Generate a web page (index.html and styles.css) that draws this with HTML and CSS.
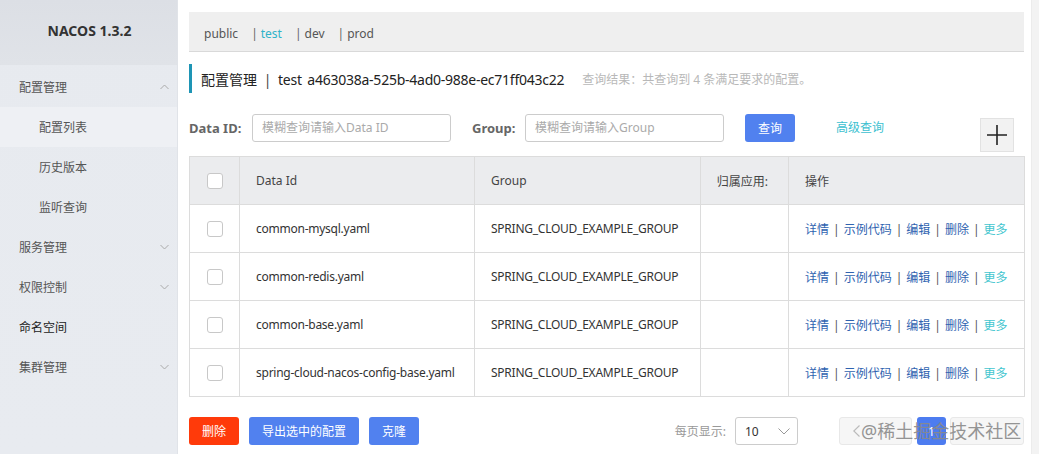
FILE: index.html
```html
<!DOCTYPE html>
<html lang="zh">
<head>
<meta charset="utf-8">
<title>NACOS</title>
<link rel="stylesheet" href="styles.css">
</head>
<body>
<div class="shell">
  <aside class="sidebar">
    <div class="brand">NACOS 1.3.2</div>
    <nav class="menu">
      <div class="item top">配置管理<svg class="chev" width="9" height="6" viewBox="0 0 9 6"><polyline points="0.5,5 4.5,1 8.5,5" fill="none" stroke="#aaa" stroke-width="1"/></svg></div>
      <div class="item sub active">配置列表</div>
      <div class="item sub">历史版本</div>
      <div class="item sub">监听查询</div>
      <div class="item top">服务管理<svg class="chev" width="9" height="6" viewBox="0 0 9 6"><polyline points="0.5,1 4.5,5 8.5,1" fill="none" stroke="#aaa" stroke-width="1"/></svg></div>
      <div class="item top">权限控制<svg class="chev" width="9" height="6" viewBox="0 0 9 6"><polyline points="0.5,1 4.5,5 8.5,1" fill="none" stroke="#aaa" stroke-width="1"/></svg></div>
      <div class="item top dark">命名空间</div>
      <div class="item top">集群管理<svg class="chev" width="9" height="6" viewBox="0 0 9 6"><polyline points="0.5,1 4.5,5 8.5,1" fill="none" stroke="#aaa" stroke-width="1"/></svg></div>
    </nav>
  </aside>

  <main class="main">
    <div class="ns-bar">
      <span class="ns">public</span>
      <span class="ns"><span class="sep">|</span><span class="cur">test</span></span>
      <span class="ns"><span class="sep">|</span>dev</span>
      <span class="ns"><span class="sep">|</span>prod</span>
    </div>

    <div class="title-row">
      <div class="title">配置管理 <span class="bar">|</span> <span class="latin">test</span> <span class="latin nsid">a463038a-525b-4ad0-988e-ec71ff043c22</span></div>
      <div class="result">查询结果：共查询到 4 条满足要求的配置。</div>
    </div>

    <div class="search-row">
      <label class="lbl">Data ID:</label>
      <div class="input w-data">模糊查询请输入Data ID</div>
      <label class="lbl lbl-group">Group:</label>
      <div class="input w-group">模糊查询请输入Group</div>
      <button class="btn btn-blue btn-query">查询</button>
      <a class="adv">高级查询</a>
      <button class="plus"><svg width="20" height="20" viewBox="0 0 20 20"><path d="M10 0V20M0 10H20" stroke="#222" stroke-width="1.6"/></svg></button>
    </div>

    <table class="tbl">
      <colgroup>
        <col class="c-chk"><col class="c-id"><col class="c-grp"><col class="c-app"><col class="c-op">
      </colgroup>
      <thead>
        <tr>
          <th class="chk-cell"><span class="cb"></span></th>
          <th>Data Id</th>
          <th>Group</th>
          <th class="th-app">归属应用:</th>
          <th>操作</th>
        </tr>
      </thead>
      <tbody>
        <tr>
          <td class="chk-cell"><span class="cb"></span></td>
          <td class="latin">common-mysql.yaml</td>
          <td class="latin">SPRING_CLOUD_EXAMPLE_GROUP</td>
          <td></td>
          <td class="ops"><a>详情</a><i>|</i><a>示例代码</a><i>|</i><a>编辑</a><i>|</i><a>删除</a><i>|</i><a class="more">更多</a></td>
        </tr>
        <tr>
          <td class="chk-cell"><span class="cb"></span></td>
          <td class="latin">common-redis.yaml</td>
          <td class="latin">SPRING_CLOUD_EXAMPLE_GROUP</td>
          <td></td>
          <td class="ops"><a>详情</a><i>|</i><a>示例代码</a><i>|</i><a>编辑</a><i>|</i><a>删除</a><i>|</i><a class="more">更多</a></td>
        </tr>
        <tr>
          <td class="chk-cell"><span class="cb"></span></td>
          <td class="latin">common-base.yaml</td>
          <td class="latin">SPRING_CLOUD_EXAMPLE_GROUP</td>
          <td></td>
          <td class="ops"><a>详情</a><i>|</i><a>示例代码</a><i>|</i><a>编辑</a><i>|</i><a>删除</a><i>|</i><a class="more">更多</a></td>
        </tr>
        <tr>
          <td class="chk-cell"><span class="cb"></span></td>
          <td class="latin">spring-cloud-nacos-config-base.yaml</td>
          <td class="latin">SPRING_CLOUD_EXAMPLE_GROUP</td>
          <td></td>
          <td class="ops"><a>详情</a><i>|</i><a>示例代码</a><i>|</i><a>编辑</a><i>|</i><a>删除</a><i>|</i><a class="more">更多</a></td>
        </tr>
      </tbody>
    </table>

    <div class="footer">
      <button class="btn btn-red">删除</button>
      <button class="btn btn-blue btn-export">导出选中的配置</button>
      <button class="btn btn-blue btn-clone">克隆</button>
      <div class="spacer"></div>
      <span class="per">每页显示:</span>
      <div class="select"><span>10</span><svg width="12" height="7" viewBox="0 0 12 7"><polyline points="0.5,0.5 6,6 11.5,0.5" fill="none" stroke="#999" stroke-width="1"/></svg></div>
      <div class="pager">
        <span class="pg prev"><svg width="7" height="12" viewBox="0 0 7 12"><polyline points="6.5,0.5 0.8,6 6.5,11.5" fill="none" stroke="#bbb" stroke-width="1.2"/></svg></span>
        <span class="pg num">1</span>
        <span class="pg next"></span>
        <span class="wm">@稀土掘金技术社区</span>
      </div>
    </div>
  </main>
  <div class="scroll"></div>
</div>
</body>
</html>
```

FILE: styles.css
```css
* { box-sizing: border-box; }
html, body { margin: 0; padding: 0; }
body {
  font-family: "Noto Sans", "Noto Sans CJK SC", sans-serif;
  font-size: 12px;
  color: #333;
  background: #fff;
}
.shell {
  display: flex;
  width: 1039px;
  height: 454px;
  overflow: hidden;
}
.latin { letter-spacing: -0.25px; }

/* sidebar */
.sidebar {
  width: 178px;
  flex: none;
  background: linear-gradient(180deg, #e7eaef 0%, #e8ebf0 100%);
  border-right: 1px solid #e0e3e8;
}
.brand {
  height: 65px;
  background: linear-gradient(180deg, #dcdfe5 0%, #e0e3e8 100%);
  display: flex;
  align-items: center;
  justify-content: center;
  font-weight: 700;
  font-size: 14px;
  color: #333;
  padding-bottom: 4px;
  padding-left: 2px;
}
.menu { padding-top: 2px; }
.item {
  height: 40px;
  display: flex;
  align-items: center;
  font-size: 12px;
  color: #555;
  position: relative;
}
.item.top { padding-left: 19px; }
.item.sub { padding-left: 39px; }
.item.dark { color: #222; }
.item.active { background: #eef0f4; }
.chev { position: absolute; left: 160px; top: 17px; }

/* main */
.main {
  flex: 1;
  min-width: 0;
  padding: 12px 7px 0 11px;
}
.ns-bar {
  height: 40px;
  background: #efefef;
  border-bottom: 1px solid #d9d9d9;
  display: flex;
  align-items: center;
  padding-left: 15px;
  padding-top: 4px;
  font-size: 12px;
  color: #555;
}
.ns { margin-right: 13px; }
.ns .sep { margin-right: 3px; color: #666; }
.ns .cur { color: #2fb3c9; }

.title-row {
  margin-top: 12px;
  height: 29px;
  display: flex;
  align-items: center;
  border-left: 3px solid #1e95b5;
  padding-left: 9px;
}
.title { font-size: 14px; color: #222; }
.title .bar { margin: 0 3px; color: #444; }
.title .nsid { margin-left: 2px; }
.result {
  margin-left: 18px;
  font-size: 12px;
  color: #b8b8b8;
}

.search-row {
  margin-top: 21px;
  height: 38px;
  display: flex;
  align-items: flex-start;
}
.lbl {
  height: 28px;
  line-height: 28px;
  font-weight: 700;
  font-size: 13px;
  color: #666;
  width: 63px;
}
.lbl-group { margin-left: 21px; width: 53px; }
.input {
  height: 28px;
  border: 1px solid #ccc;
  border-radius: 3px;
  line-height: 26px;
  padding-left: 9px;
  color: #aaa;
  font-size: 12px;
}
.w-data { width: 199px; }
.w-group { width: 199px; }
.btn {
  height: 28px;
  border: none;
  border-radius: 3px;
  color: #fff;
  font-family: inherit;
  font-size: 12px;
  padding: 0;
  cursor: pointer;
}
.btn-blue { background: #5181ef; }
.btn-red { background: #ff3a0a; width: 50px; }
.btn-query { width: 50px; margin-left: 21px; }
.adv {
  margin-left: 41px;
  line-height: 28px;
  color: #3cbfd0;
  font-size: 12px;
}
.plus {
  margin-left: auto;
  margin-right: 10px;
  margin-top: 4px;
  width: 34px;
  height: 34px;
  background: #f2f2f2;
  border: 1px solid #e2e2e2;
  padding: 0;
  display: flex;
  align-items: center;
  justify-content: center;
}

/* table */
.tbl {
  margin-top: 4px;
  width: 835px;
  border-collapse: collapse;
  table-layout: fixed;
}
.c-chk { width: 50px; }
.c-id { width: 235px; }
.c-grp { width: 226px; }
.c-app { width: 88px; }
.c-op { width: 236px; }
.tbl th, .tbl td {
  border: 1px solid #dcdcdc;
  height: 48px;
  padding: 0 0 0 16px;
  text-align: left;
  vertical-align: middle;
  font-weight: 400;
  font-size: 12px;
  color: #333;
  white-space: nowrap;
}
.tbl thead th { background: #ebecee; color: #444; }
.tbl th.th-app { text-align: right; padding: 0 20px 0 0; }
.tbl .chk-cell { padding: 0; text-align: center; }
.cb {
  display: inline-block;
  width: 16px;
  height: 16px;
  border: 1px solid #c8c8c8;
  border-radius: 3px;
  background: #fff;
  vertical-align: middle;
}
.ops a { color: #2f63b0; }
.ops a.more { color: #43c6cf; }
.ops i { font-style: normal; color: #555; margin: 0 4px; }

/* footer */
.footer {
  margin-top: 20px;
  display: flex;
  align-items: center;
  height: 28px;
}
.btn-export { width: 110px; margin-left: 10px; }
.btn-clone { width: 50px; margin-left: 10px; }
.spacer { flex: 1; }
.per { color: #999; font-size: 12px; margin-right: 9px; }
.select {
  width: 63px;
  height: 28px;
  border: 1px solid #ccc;
  border-radius: 3px;
  display: flex;
  align-items: center;
  justify-content: space-between;
  padding: 0 7px 0 9px;
  color: #333;
  font-size: 12px;
}
.pager {
  margin-left: 41px;
  display: flex;
  align-items: center;
  position: relative;
}
.pg {
  height: 28px;
  border-radius: 3px;
  display: flex;
  align-items: center;
}
.prev {
  width: 73px;
  background: #f6f6f6;
  border: 1px solid #e8e8e8;
  padding-left: 13px;
}
.num {
  width: 29px;
  margin-left: 5px;
  background: #4d7cf0;
  color: #fff;
  justify-content: center;
}
.next {
  width: 74px;
  margin-left: 4px;
  background: #f6f6f6;
  border: 1px solid #e8e8e8;
}
.wm {
  position: absolute;
  left: 22px;
  top: 50%;
  transform: translateY(-52%);
  font-size: 18px;
  color: #8a8a8a;
  opacity: 0.9;
  white-space: nowrap;
}

.scroll {
  width: 8px;
  flex: none;
  background: #f3f3f3;
  border-left: 1px solid #ececec;
}
```
